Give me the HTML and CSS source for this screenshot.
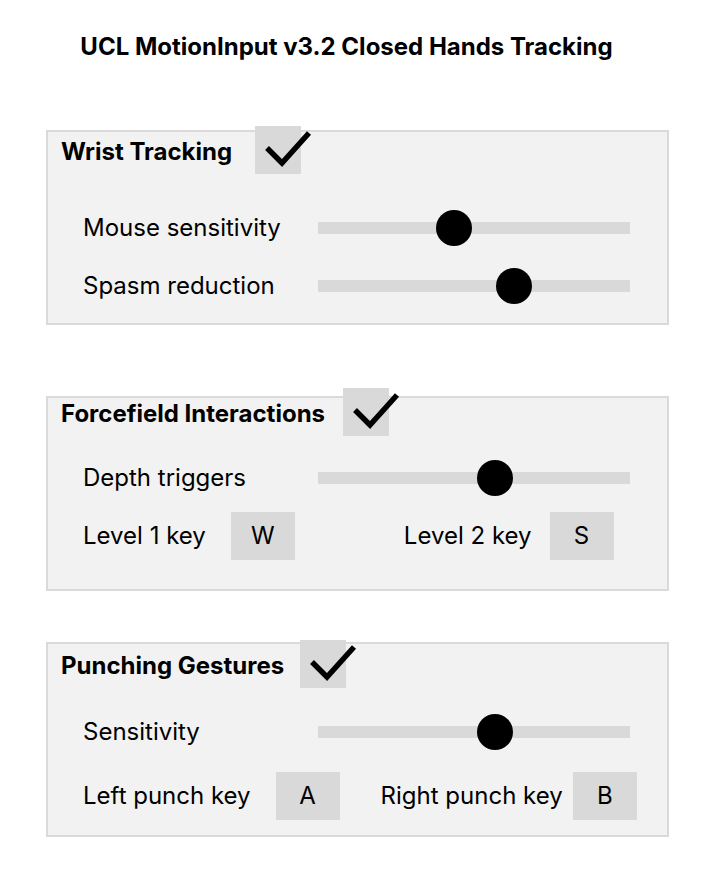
FILE: index.html
```html
<!DOCTYPE html>
<html lang="en">
<head>
<meta charset="utf-8">
<title>UCL MotionInput v3.2 Closed Hands Tracking</title>
<link rel="stylesheet" href="styles.css">
</head>
<body>
<main class="page">
  <h1 class="page-title">UCL MotionInput v3.2 Closed Hands Tracking</h1>

  <section class="panel panel--wrist">
    <header class="panel-head">
      <h2 class="panel-title">Wrist Tracking</h2>
      <span class="check">
        <svg class="check-icon" viewBox="0 0 46 48" width="46" height="48"><path d="M12 22 L27 37 L54 7"/></svg>
      </span>
    </header>
    <div class="row row--slider">
      <span class="label">Mouse sensitivity</span>
      <div class="track"><span class="thumb" style="left: 43.6%"></span></div>
    </div>
    <div class="row row--slider">
      <span class="label">Spasm reduction</span>
      <div class="track"><span class="thumb" style="left: 62.8%"></span></div>
    </div>
  </section>

  <section class="panel panel--force">
    <header class="panel-head">
      <h2 class="panel-title">Forcefield Interactions</h2>
      <span class="check">
        <svg class="check-icon" viewBox="0 0 46 48" width="46" height="48"><path d="M12 22 L27 37 L54 7"/></svg>
      </span>
    </header>
    <div class="row row--slider">
      <span class="label">Depth triggers</span>
      <div class="track"><span class="thumb" style="left: 56.7%"></span></div>
    </div>
    <div class="row row--keys">
      <div class="key-group">
        <span class="key-label">Level 1 key</span>
        <span class="key">W</span>
      </div>
      <div class="key-group key-group--second">
        <span class="key-label">Level 2 key</span>
        <span class="key">S</span>
      </div>
    </div>
  </section>

  <section class="panel panel--punch">
    <header class="panel-head">
      <h2 class="panel-title">Punching Gestures</h2>
      <span class="check">
        <svg class="check-icon" viewBox="0 0 46 48" width="46" height="48"><path d="M12 22 L27 37 L54 7"/></svg>
      </span>
    </header>
    <div class="row row--slider">
      <span class="label">Sensitivity</span>
      <div class="track"><span class="thumb" style="left: 56.7%"></span></div>
    </div>
    <div class="row row--keys">
      <div class="key-group">
        <span class="key-label">Left punch key</span>
        <span class="key">A</span>
      </div>
      <div class="key-group key-group--second">
        <span class="key-label">Right punch key</span>
        <span class="key">B</span>
      </div>
    </div>
  </section>
</main>
</body>
</html>
```

FILE: styles.css
```css
* { box-sizing: border-box; }

html, body {
  margin: 0;
  padding: 0;
  background: #ffffff;
}

body {
  font-family: Inter, "Noto Sans", "Liberation Sans", sans-serif;
  color: #000;
}

.page {
  width: 718px;
  height: 870px;
  padding: 0 49px 0 46px;
  display: flex;
  flex-direction: column;
}

.page-title {
  margin: 33px 0 0 0;
  padding-right: 22px;
  height: 28px;
  line-height: 28px;
  font-size: 24px;
  font-weight: 700;
  text-align: center;
}

.panel {
  --head-shift: -6px;
  --first-gap: 30px;
  --row-gap: 10px;
  --pad-bottom: 13px;
  width: 623px;
  height: 195px;
  background: #f2f2f2;
  border: 2px solid #dadada;
  display: flex;
  flex-direction: column;
  padding: 0 0 var(--pad-bottom) 13px;
}

.panel--wrist { margin-top: 69px; }
.panel--force {
  margin-top: 71px;
  --head-shift: -10px;
  --first-gap: 18px;
  --row-gap: 10px;
  --pad-bottom: 29px;
}
.panel--punch {
  margin-top: 51px;
  --head-shift: -4px;
  --first-gap: 20px;
  --row-gap: 16px;
  --pad-bottom: 15px;
}

.panel-head {
  display: flex;
  align-items: center;
  height: 48px;
  margin-top: var(--head-shift);
  gap: 23px;
}

.panel-title {
  margin: 0;
  padding-top: 4px;
  font-size: 24px;
  font-weight: 700;
  line-height: 28px;
}

.panel--force .panel-head { gap: 18px; }
.panel--punch .panel-head { gap: 16px; }

.check {
  position: relative;
  width: 46px;
  height: 48px;
  background: #d9d9d9;
  flex: none;
}

.check-icon {
  position: absolute;
  left: 0;
  top: 0;
  overflow: visible;
}

.check-icon path {
  fill: none;
  stroke: #000;
  stroke-width: 5.5;
  stroke-linejoin: miter;
  stroke-linecap: butt;
}

.row {
  display: flex;
  align-items: center;
  height: 48px;
  padding-left: 22px;
  font-size: 24px;
  line-height: 28px;
}

.row--slider { margin-top: var(--row-gap); }
.panel-head + .row { margin-top: var(--first-gap); }
.row--keys { margin-top: var(--row-gap); }

.label {
  width: 235px;
  flex: none;
}

.track {
  position: relative;
  width: 312px;
  height: 12px;
  background: #d9d9d9;
}

.thumb {
  position: absolute;
  top: 50%;
  width: 36px;
  height: 36px;
  margin: -18px 0 0 -18px;
  border-radius: 50%;
  background: #000;
}

.key-group {
  display: flex;
  align-items: center;
  gap: 25px;
}

.panel--force .key-group--second {
  margin-left: 109px;
  gap: 18px;
}
.panel--punch .key-group--second {
  margin-left: 41px;
  gap: 10px;
}

.key {
  width: 64px;
  height: 48px;
  background: #d9d9d9;
  display: flex;
  align-items: center;
  justify-content: center;
  font-size: 24px;
}
```
